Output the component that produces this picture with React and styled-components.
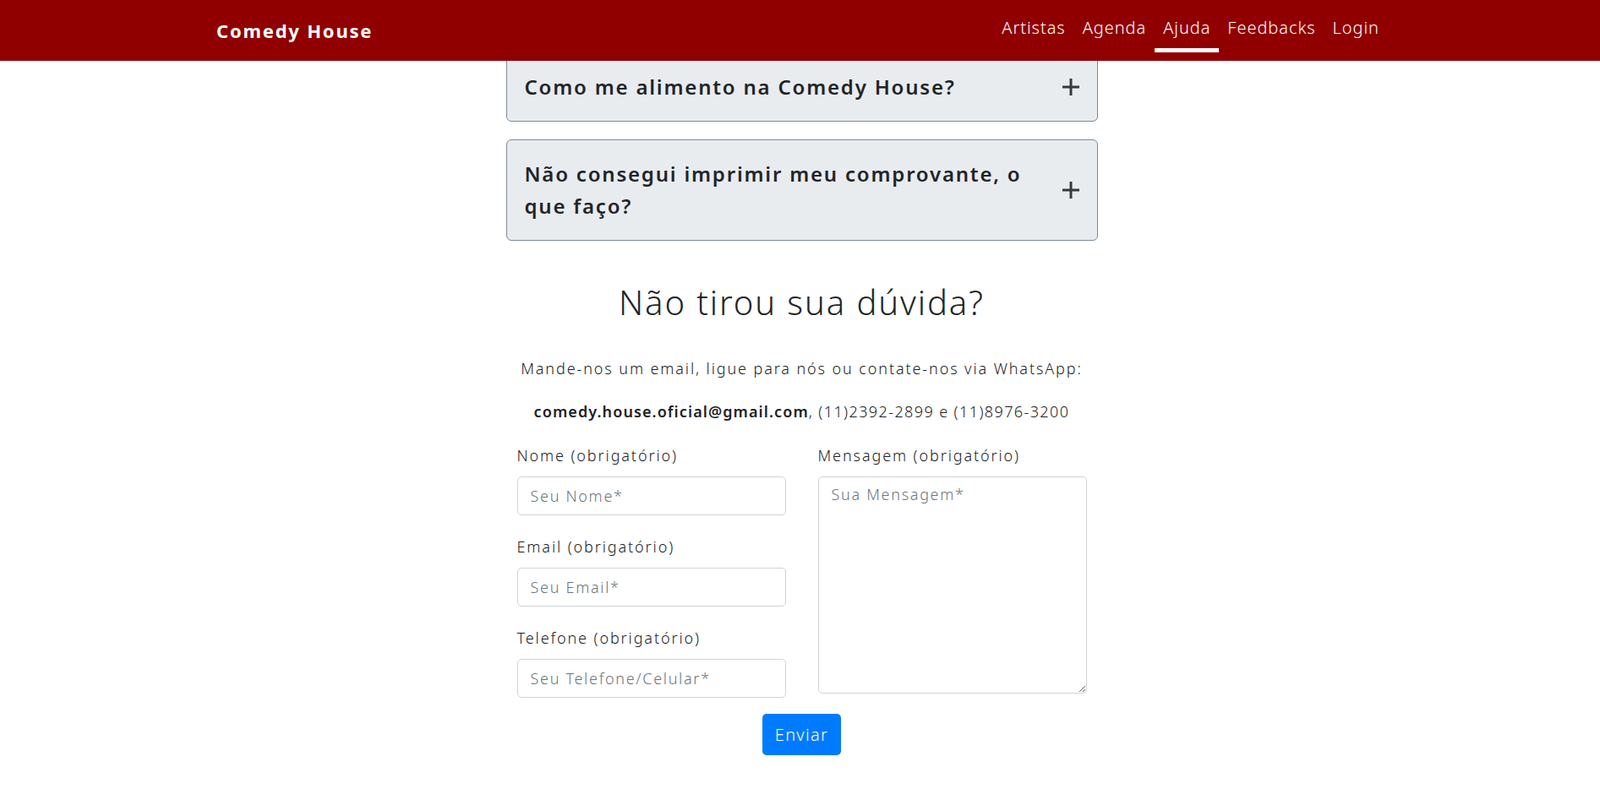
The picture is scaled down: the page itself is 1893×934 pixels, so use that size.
import React from 'react';
import styled, { createGlobalStyle } from 'styled-components';

const GlobalStyle = createGlobalStyle`
  *, *::before, *::after {
    box-sizing: border-box;
  }
  body {
    margin: 0;
    background: #fff;
    color: #212529;
    font-family: 'Noto Sans', 'Open Sans', sans-serif;
  }
`;

// Top bar, fixed over the scrolled page
const Navbar = styled.header`
  position: fixed;
  top: 0;
  left: 0;
  right: 0;
  height: 72px;
  background-color: #900000;
  z-index: 10;
`;

const NavInner = styled.div`
  height: 100%;
  display: flex;
  align-items: flex-start;
  justify-content: space-between;
  padding: 0 251px 0 256px;
`;

const Brand = styled.a`
  color: #fff;
  font-weight: 700;
  font-size: 22px;
  letter-spacing: 1.8px;
  text-decoration: none;
  line-height: 72px;
`;

const NavLinks = styled.nav`
  display: flex;
`;

const NavLink = styled.a`
  display: flex;
  align-items: center;
  height: 62px;
  padding: 7px 10px 0;
  color: #fff;
  font-size: 20px;
  font-weight: 300;
  letter-spacing: 0.95px;
  text-decoration: none;
  border-bottom: 5px solid ${props => (props.$active ? '#fff' : 'transparent')};
`;

const Main = styled.main`
  width: 700px;
  margin: 0 auto;
  padding: 62px 0 40px;
  position: relative;
  left: 2px;
`;

const AccordionItem = styled.div`
  display: flex;
  align-items: center;
  justify-content: space-between;
  background-color: #e9ecef;
  border: 1px solid #7a8a99;
  border-radius: 6px;
  padding: 21px 20px 21px 21px;
  margin-bottom: 21px;
`;

const Question = styled.h3`
  margin: 0;
  max-width: 595px;
  font-size: 24px;
  font-weight: 600;
  line-height: 38px;
  letter-spacing: 1.8px;
  color: #212529;
`;

const Plus = styled.svg`
  width: 22px;
  height: 22px;
  flex-shrink: 0;
`;

const Heading = styled.h2`
  margin: 49px 0 0;
  text-align: center;
  font-size: 40px;
  font-weight: 300;
  line-height: 48px;
  letter-spacing: 1.9px;
`;

const Text = styled.p`
  margin: ${props => props.$top || 0}px 0 0;
  text-align: center;
  font-size: 18px;
  font-weight: 300;
  line-height: 27px;
  color: #1d2125;
  letter-spacing: ${props => props.$spacing || 1.5}px;

  strong {
    font-weight: 600;
    letter-spacing: 1.1px;
  }
`;

const Form = styled.form`
  margin-top: 25px;
  padding: 0 13px;
`;

const Columns = styled.div`
  display: grid;
  grid-template-columns: 1fr 1fr;
  column-gap: 38px;
`;

const Column = styled.div`
  display: flex;
  flex-direction: column;
`;

const Group = styled.div`
  display: flex;
  flex-direction: column;
  margin-bottom: ${props => props.$last ? 0 : 24}px;
`;

const Label = styled.label`
  font-size: 18px;
  font-weight: 300;
  line-height: 27px;
  margin-bottom: 11px;
  letter-spacing: 1.9px;
  color: #1d2125;
`;

const fieldStyles = `
  width: 100%;
  font-family: inherit;
  font-size: 18px;
  font-weight: 300;
  letter-spacing: 1.7px;
  color: #495057;
  background: #fff;
  border: 1px solid #ced4da;
  border-radius: 5px;
  padding: 0 15px;
  outline: none;
  &::placeholder {
    color: #6c757d;
  }
`;

const Input = styled.input`
  ${fieldStyles}
  height: 46px;
`;

const TextArea = styled.textarea`
  ${fieldStyles}
  height: 257px;
  padding-top: 7px;
  line-height: 27px;
  resize: vertical;
`;

const Actions = styled.div`
  display: flex;
  justify-content: center;
  margin-top: 19px;
`;

const Button = styled.button`
  height: 49px;
  padding: 0 15px;
  font-family: inherit;
  font-size: 20px;
  font-weight: 300;
  letter-spacing: 1.3px;
  color: #fff;
  background-color: #007bff;
  border: none;
  border-radius: 5px;
  cursor: pointer;
`;

const PlusIcon = () => (
  <Plus viewBox="0 0 22 22">
    <path d="M11 1v20M1 11h20" stroke="#343a40" strokeWidth="3" fill="none" />
  </Plus>
);

const questions = [
  'Como me alimento na Comedy House?',
  'Não consegui imprimir meu comprovante, o que faço?',
];

const links = ['Artistas', 'Agenda', 'Ajuda', 'Feedbacks', 'Login'];

const App = () => (
  <>
    <GlobalStyle />
    <Navbar>
      <NavInner>
        <Brand href="#">Comedy House</Brand>
        <NavLinks>
          {links.map(l => (
            <NavLink key={l} href="#" $active={l === 'Ajuda'}>{l}</NavLink>
          ))}
        </NavLinks>
      </NavInner>
    </Navbar>
    <Main>
      {questions.map(q => (
        <AccordionItem key={q}>
          <Question>{q}</Question>
          <PlusIcon />
        </AccordionItem>
      ))}
      <Heading>Não tirou sua dúvida?</Heading>
      <Text $top={41} $spacing={1.9}>Mande-nos um email, ligue para nós ou contate-nos via WhatsApp:</Text>
      <Text $top={24} $spacing={1.4}>
        <strong>comedy.house.oficial@gmail.com</strong>, (11)2392-2899 e (11)8976-3200
      </Text>
      <Form onSubmit={e => e.preventDefault()}>
        <Columns>
          <Column>
            <Group>
              <Label>Nome (obrigatório)</Label>
              <Input placeholder="Seu Nome*" />
            </Group>
            <Group>
              <Label>Email (obrigatório)</Label>
              <Input placeholder="Seu Email*" />
            </Group>
            <Group $last>
              <Label>Telefone (obrigatório)</Label>
              <Input placeholder="Seu Telefone/Celular*" />
            </Group>
          </Column>
          <Column>
            <Group $last>
              <Label>Mensagem (obrigatório)</Label>
              <TextArea placeholder="Sua Mensagem*" />
            </Group>
          </Column>
        </Columns>
        <Actions>
          <Button type="submit">Enviar</Button>
        </Actions>
      </Form>
    </Main>
  </>
);

export default App;
